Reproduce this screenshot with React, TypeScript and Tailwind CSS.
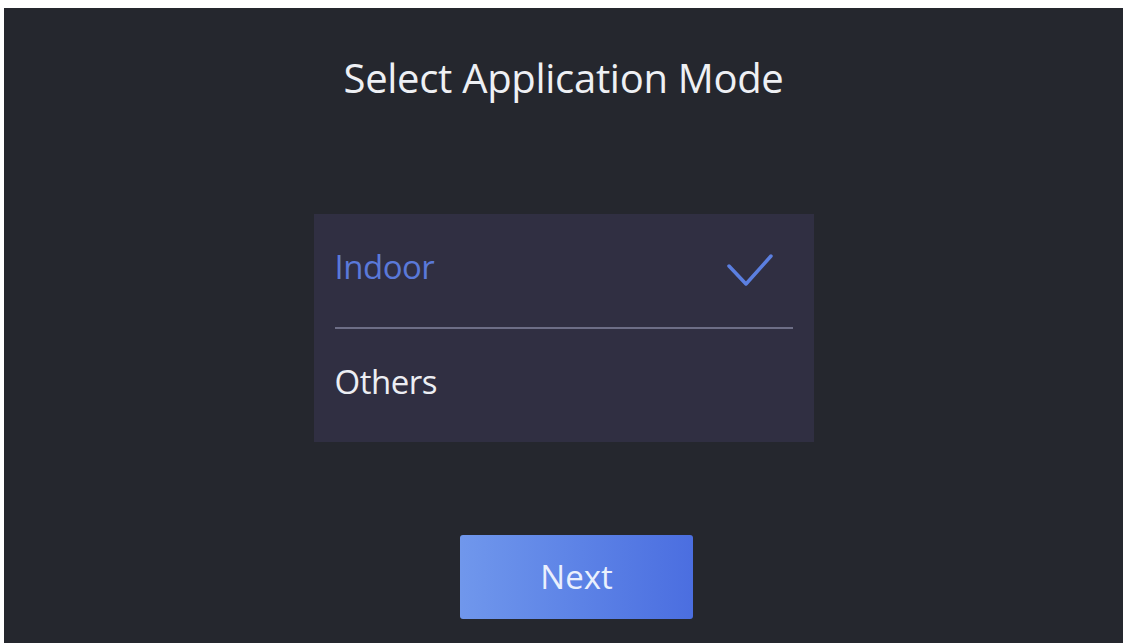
const font = { fontFamily: '"Open Sans", "Noto Sans", sans-serif' };

function ModeRow({ label, selected }: { label: string; selected?: boolean }) {
  return (
    <div className="flex h-[113px] items-center justify-between pb-[8px]">
      <span
        className={`text-[33px] leading-none tracking-[-0.5px] ${
          selected ? "text-[#5a79d9]" : "text-[#eceef3]"
        }`}
      >
        {label}
      </span>
      {selected && (
        <svg width="48" height="34" viewBox="0 0 48 34" className="mr-[20px] mb-[-6px]">
          <path
            d="M4 13 L21 31 L46 3"
            fill="none"
            stroke="#5b7fe0"
            strokeWidth="3.5"
            strokeLinecap="round"
            strokeLinejoin="round"
          />
        </svg>
      )}
    </div>
  );
}

export default function App() {
  return (
    <div className="h-[643px] w-[1126px] bg-white pt-[8px] pl-[4px] pr-[3px]" style={font}>
      <div className="flex h-full flex-col items-center bg-[#25272e]">
        <h1 className="mt-[50px] text-[40px] leading-none tracking-[-0.3px] text-[#eef0f4]">
          Select Application Mode
        </h1>

        <div className="mt-[116px] w-[500px] bg-[#302f42] px-[21px]">
          <ModeRow label="Indoor" selected />
          <div className="h-[2px] bg-[#6d6e86]" />
          <ModeRow label="Others" />
        </div>

        <button className="mt-[93px] ml-[26px] flex h-[84px] w-[233px] items-center justify-center rounded-[3px] bg-gradient-to-r from-[#7097ec] to-[#4b6ee0] text-[33px] text-[#eaf0fd]">
          Next
        </button>
      </div>
    </div>
  );
}
